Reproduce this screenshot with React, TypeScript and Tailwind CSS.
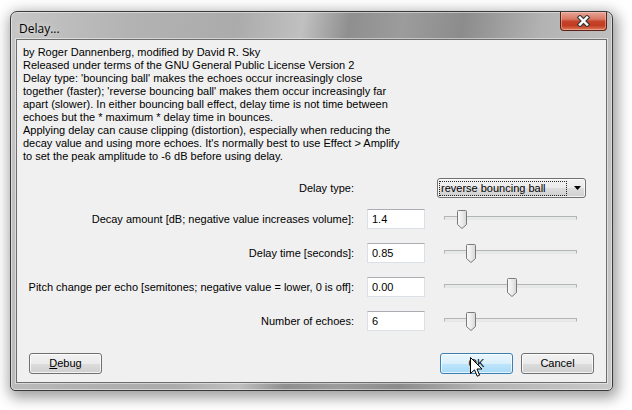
import React from "react";

const rows = [
  { label: "Decay amount [dB; negative value increases volume]:", value: "1.4", thumb: 20 },
  { label: "Delay time [seconds]:", value: "0.85", thumb: 29 },
  { label: "Pitch change per echo [semitones; negative value = lower, 0 is off]:", value: "0.00", thumb: 70 },
  { label: "Number of echoes:", value: "6", thumb: 29 },
];

const body = "font-['Liberation_Sans',Arial,sans-serif] text-[11px] leading-[13px] text-black";

function Slider({ thumb }: { thumb: number }) {
  return (
    <div className="relative w-[149px] h-[20px]">
      <div className="absolute left-[7px] right-[9px] top-[7px] h-[4px] border border-[#b4b4b4] border-b-[#e6e6e6] bg-[#e7eaea]" />
      <svg
        className="absolute top-[1px]"
        style={{ left: thumb }}
        width="11"
        height="20"
        viewBox="0 0 11 20"
      >
        <defs>
          <linearGradient id={`tg${thumb}`} x1="0" y1="0" x2="1" y2="0">
            <stop offset="0" stopColor="#fafafa" />
            <stop offset="0.5" stopColor="#ececec" />
            <stop offset="1" stopColor="#d6d6d6" />
          </linearGradient>
        </defs>
        <path
          d="M1.5 0.5 H8.5 Q9.5 0.5 9.5 1.5 V14.5 L5 18.5 L0.5 14.5 V1.5 Q0.5 0.5 1.5 0.5 Z"
          fill={`url(#tg${thumb})`}
          stroke="#7a7a7a"
        />
      </svg>
    </div>
  );
}

function Button({ children, primary }: { children: React.ReactNode; primary?: boolean }) {
  return (
    <div
      className={
        "w-[73px] h-[21px] rounded-[3px] border flex items-center justify-center " +
        (primary
          ? "border-[#3c7fb1] bg-[linear-gradient(to_bottom,#eaf6fd_0%,#d9f0fc_50%,#bee6fd_51%,#a7d9f5_100%)] shadow-[inset_0_0_0_1px_rgba(255,255,255,0.7)]"
          : "border-[#707070] bg-[linear-gradient(to_bottom,#f2f2f2_0%,#ebebeb_50%,#dddddd_51%,#cfcfcf_100%)] shadow-[inset_0_0_0_1px_rgba(255,255,255,0.75)]")
      }
    >
      {children}
    </div>
  );
}

export default function App() {
  return (
    <div className="w-[632px] h-[410px] bg-white pt-[11px] pl-[10px] overflow-hidden">
      <div className="relative w-[603px] h-[380px] rounded-t-[7px] rounded-b-[5px] border border-[#3a3a3a] bg-[linear-gradient(100deg,#c6c6c6_0%,#b3b3b3_18%,#ababab_34%,#c0c0c0_44%,#8f8f8f_51%,#9c9c9c_59%,#8c8c8c_68%,#b3b3b3_80%,#c9c9c9_100%)] shadow-[2px_4px_14px_3px_rgba(0,0,0,0.38),inset_0_0_0_1px_rgba(255,255,255,0.45)] flex flex-col">
        {/* title bar */}
        <div className="h-[27px] flex items-start justify-between">
          <div className="pl-[8px] pt-[10px] font-['Open_Sans','Noto_Sans',sans-serif] text-[12px] leading-[14px] text-black [text-shadow:0_0_6px_rgba(255,255,255,0.9)]">
            Delay...
          </div>
          <div className="mr-[5px] w-[47px] h-[19px] rounded-b-[4px] border border-t-0 border-[#5b2117] bg-[linear-gradient(to_bottom,#e8a595_0%,#d87763_40%,#c5432a_52%,#c23c22_75%,#de7a58_100%)] shadow-[inset_0_0_0_1px_rgba(255,210,200,0.45)] flex items-center justify-center">
            <svg width="15" height="12" viewBox="0 0 15 12">
              <path d="M4 2.5 L11 9.5 M11 2.5 L4 9.5" stroke="#3a3a3a" strokeWidth="4.6" strokeLinecap="square" />
              <path d="M4 2.5 L11 9.5 M11 2.5 L4 9.5" stroke="#ffffff" strokeWidth="2.4" strokeLinecap="square" />
            </svg>
          </div>
        </div>
        {/* client */}
        <div className="mx-[5px] mb-[7px] flex-1 border border-[#6e6e6e] bg-[#f0f0f0] shadow-[0_0_0_1px_rgba(255,255,255,0.45)] flex flex-col relative">
          <div className={body + " pl-[6px] pt-[6px] whitespace-pre"}>
            {"by Roger Dannenberg, modified by David R. Sky\nReleased under terms of the GNU General Public License Version 2\nDelay type: 'bouncing ball' makes the echoes occur increasingly close\ntogether (faster); 'reverse bouncing ball' makes them occur increasingly far\napart (slower). In either bouncing ball effect, delay time is not time between\nechoes but the * maximum * delay time in bounces.\nApplying delay can cause clipping (distortion), especially when reducing the\ndecay value and using more echoes. It's normally best to use Effect > Amplify\nto set the peak amplitude to -6 dB before using delay."}
          </div>

          {/* delay type row */}
          <div className={body + " mt-[15px] flex items-center h-[20px]"}>
            <div className="w-[337px] text-right">Delay type:</div>
            <div className="ml-[83px] w-[149px] h-[20px] rounded-[3px] border border-[#707070] bg-[linear-gradient(to_bottom,#f2f2f2_0%,#ebebeb_50%,#dddddd_51%,#cfcfcf_100%)] shadow-[inset_0_0_0_1px_rgba(255,255,255,0.75)] flex items-center">
              <div className="ml-[1px] w-[128px] h-[15px] border border-dotted border-[#222] flex items-center pl-[1px]">
                reverse bouncing ball
              </div>
              <svg className="ml-[6px]" width="9" height="6" viewBox="0 0 9 6">
                <path d="M1 1 H8 L4.5 5 Z" fill="#000" />
              </svg>
            </div>
          </div>

          {/* numeric rows */}
          <div className={body + " mt-[11px] flex flex-col gap-[14px]"}>
            {rows.map((r) => (
              <div key={r.label} className="flex items-center h-[20px]">
                <div className="w-[337px] text-right whitespace-nowrap">{r.label}</div>
                <div className="ml-[13px] w-[58px] h-[20px] bg-white border border-[#dbdfe6] border-t-[#abadb3] flex items-center pl-[4px]">
                  {r.value}
                </div>
                <div className="ml-[12px]">
                  <Slider thumb={r.thumb} />
                </div>
              </div>
            ))}
          </div>

          {/* buttons */}
          <div className={body + " mt-[22px] px-[12px] flex items-center"}>
            <Button>
              <span>
                <span className="underline">D</span>ebug
              </span>
            </Button>
            <div className="flex-1" />
            <Button primary>OK</Button>
            <div className="w-[8px]" />
            <Button>Cancel</Button>
          </div>

          {/* mouse cursor */}
          <svg
            className="absolute left-[453px] top-[317px]"
            width="13"
            height="21"
            viewBox="0 0 13 21"
          >
            <path
              d="M0.5 0.5 L0.5 16.5 L4.5 12.8 L7.2 19.2 L9.6 18.2 L7 12 L12 12 Z"
              fill="#fff"
              stroke="#000"
              strokeWidth="1"
              strokeLinejoin="miter"
            />
          </svg>
        </div>
      </div>
    </div>
  );
}
